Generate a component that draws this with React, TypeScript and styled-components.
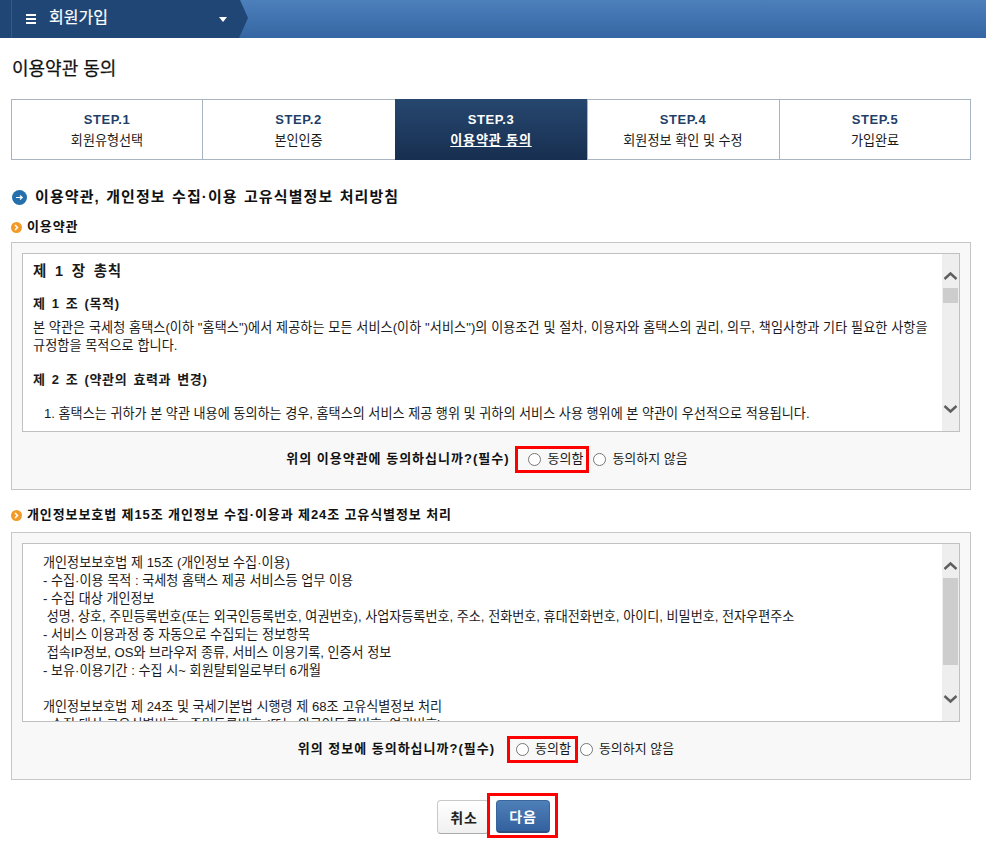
import React from "react";
import styled, { createGlobalStyle } from "styled-components";

const Global = createGlobalStyle`
  html, body { margin: 0; padding: 0; background: #fff; }
  body { font-family: "Liberation Sans", "Noto Sans CJK KR", sans-serif; font-size: 13px; color: #1a1a1a; }
  * { box-sizing: border-box; }
`;

const Page = styled.div`
  width: 986px;
  height: 844px;
  overflow: hidden;
  display: flex;
  flex-direction: column;
`;

const TopBar = styled.header`
  height: 38px;
  display: flex;
  background: linear-gradient(#4c80bb, #3566a3);
`;

const MenuTab = styled.div`
  width: 248px;
  height: 38px;
  flex: none;
  padding-left: 11px;
  color: #fff;
  background: #204675;
  clip-path: polygon(0 0, 240px 0, 248px 18px, 239px 38px, 0 38px);
`;

const MenuInner = styled.div`
  height: 38px;
  display: flex;
  align-items: center;
  border-left: 1px solid #2d5c92;
  padding-left: 14px;
`;

const MenuTitle = styled.span`
  font-size: 16px;
  line-height: 24px;
  margin-left: 13px;
  width: 170px;
  margin-top: -3px;
  -webkit-text-stroke: 0.2px #fff;
`;

const Main = styled.main`
  padding: 0 15px 0 11px;
  display: flex;
  flex-direction: column;
`;

const PageTitle = styled.h1`
  margin: 21px 0 0 1px;
  height: 40px;
  font-size: 18px;
  line-height: 20px;
  font-weight: 400;
  color: #111;
  -webkit-text-stroke: 0.25px #111;
`;

const Steps = styled.ol`
  list-style: none;
  margin: 0;
  padding: 0;
  display: grid;
  grid-template-columns: 190px 193px 192px 192px 1fr;
  height: 61px;
  border: 1px solid #a8b4c0;
`;

const Step = styled.li<{ $active?: boolean; $first?: boolean; $inner?: boolean }>`
  display: flex;
  flex-direction: column;
  align-items: center;
  border-left: ${(p) => (p.$first || p.$active ? "0" : "1px solid #a8b4c0")};
  margin: ${(p) => (p.$active ? "-1px 0" : "0")};
  height: ${(p) => (p.$active ? "61px" : "59px")};
  padding-top: ${(p) => (p.$active ? "12px" : "11px")};
  padding-right: ${(p) => (p.$inner ? "1px" : "0")};
  background: ${(p) => (p.$active ? "linear-gradient(#27476f, #172f50)" : "#fff")};
  color: ${(p) => (p.$active ? "#fff" : "#1a1a1a")};
`;

const StepNo = styled.span<{ $active?: boolean }>`
  font-size: 13px;
  line-height: 18px;
  font-weight: 700;
  letter-spacing: 0.6px;
  color: ${(p) => (p.$active ? "#fff" : "#1f3f68")};
`;

const StepName = styled.span<{ $active?: boolean }>`
  font-size: 13.1px;
  line-height: 18px;
  margin-top: 3px;
  font-weight: ${(p) => (p.$active ? 700 : 400)};
  letter-spacing: ${(p) => (p.$active ? "0.8px" : "0")};
  text-decoration: ${(p) => (p.$active ? "underline" : "none")};
`;

const SectionTitle = styled.h2`
  margin: 27px 0 0 1px;
  display: flex;
  align-items: center;
  gap: 8px;
  height: 20px;
  font-size: 15px;
  line-height: 20px;
  font-weight: 700;
  letter-spacing: 1.1px;
  word-spacing: 1px;
  color: #111;
`;

const SubTitle = styled.h3<{ $top: number }>`
  margin: ${(p) => p.$top}px 0 0;
  display: flex;
  align-items: center;
  gap: 5px;
  height: 18px;
  font-size: 13px;
  line-height: 18px;
  font-weight: 700;
  letter-spacing: 0.9px;
  color: #111;
`;

const AgreeBox = styled.section<{ $top: number }>`
  margin-top: ${(p) => p.$top}px;
  height: 248px;
  border: 1px solid #c6c6c6;
  background: #f8f8f8;
  padding: 10px 10px 0;
  display: flex;
  flex-direction: column;
`;

const TermsFrame = styled.div`
  height: 179px;
  border: 1px solid #c0c0c0;
  background: #fff;
  display: flex;
  flex: none;
`;

const TermsBody = styled.div`
  flex: 1;
  min-width: 0;
  overflow: hidden;
  padding: 7px 10px 0;
`;

const Scrollbar = styled.div`
  width: 17px;
  flex: none;
  background: #eee;
  display: flex;
  flex-direction: column;
  align-items: center;
  padding-right: 1px;
  padding-top: 17px;
`;

const Thumb = styled.div<{ $h: number }>`
  width: 15px;
  height: ${(p) => p.$h}px;
  margin-top: 7px;
  background: #cdcdcd;
`;

const BottomArrow = styled.svg`
  margin-top: auto;
  margin-bottom: 17px;
`;

const ChapterTitle = styled.h4`
  margin: 0;
  font-size: 14.5px;
  line-height: 20px;
  font-weight: 700;
  letter-spacing: 0.8px;
  word-spacing: 3px;
  color: #1a1a1a;
`;

const ArticleTitle = styled.h5<{ $top: number }>`
  margin: ${(p) => p.$top}px 0 0;
  font-size: 13px;
  line-height: 18px;
  font-weight: 700;
  letter-spacing: 0.6px;
  word-spacing: 2px;
  color: #1a1a1a;
`;

const Para = styled.p`
  margin: 6px 0 0;
  font-size: 13.1px;
  line-height: 18px;
  letter-spacing: 0.08px;
  color: #1a1a1a;
`;

const TermList = styled.ol`
  margin: 16px 0 0;
  padding: 0 0 0 11px;
  list-style: none;
  font-size: 13.1px;
  line-height: 18px;
`;

const PlainLines = styled.div`
  padding: 3px 0 0 10px;
  font-size: 13.1px;
  line-height: 18px;
  white-space: pre;
  color: #1a1a1a;
`;

const Question = styled.div<{ $shift: number }>`
  flex: 1;
  display: flex;
  align-items: center;
  justify-content: center;
  padding: 0 ${(p) => p.$shift}px 3px 0;
  font-size: 13px;
  line-height: 18px;
`;

const QuestionText = styled.strong<{ $gap: number }>`
  font-weight: 700;
  letter-spacing: 1px;
  color: #111;
  margin-right: ${(p) => p.$gap}px;
`;

const Choice = styled.label<{ $after?: number }>`
  display: inline-flex;
  align-items: center;
  margin-right: ${(p) => p.$after ?? 0}px;
  gap: 6px;
  white-space: nowrap;
`;

const MarkedChoice = styled(Choice)<{ $pl: number; $pr: number }>`
  height: 27px;
  padding: 0 ${(p) => p.$pr}px 0 ${(p) => p.$pl}px;
  border: 3px solid #f00;
`;

const Radio = styled.input.attrs({ type: "radio" })`
  margin: 0;
  width: 13px;
  height: 13px;
`;

const Actions = styled.div`
  margin-top: 13px;
  display: flex;
  justify-content: center;
  align-items: flex-start;
  padding-left: 13px;
`;

const CancelButton = styled.button`
  width: 52px;
  height: 34px;
  margin: 7px -2px 0 0;
  border: 1px solid #c8c8c8;
  border-bottom-color: #aaa;
  border-radius: 4px;
  background: linear-gradient(#fff, #f0f0f0);
  font: 700 14px "Liberation Sans", "Noto Sans CJK KR", sans-serif;
  letter-spacing: 0.8px;
  color: #222;
  padding: 0 0 0 2px;
`;

const NextMark = styled.div`
  border: 3px solid #f00;
  padding: 4px 5px 0 6px;
  height: 45px;
  width: 71px;
  display: flex;
  position: relative;
`;

const NextButton = styled.button`
  width: 54px;
  height: 33px;
  margin: 0;
  border: 1px solid #3a659c;
  border-bottom: 2px solid #2b4f80;
  border-radius: 4px;
  background: linear-gradient(#4f7fb7, #33619f);
  font: 700 14px "Liberation Sans", "Noto Sans CJK KR", sans-serif;
  letter-spacing: 0.8px;
  color: #fff;
  padding: 0;
`;

const Up = () => (
  <svg width="15" height="10" viewBox="0 0 15 10"><path d="M1.5 8 7.5 2.5 13.5 8" fill="none" stroke="#5f5f5f" strokeWidth="2.4" /></svg>
);
const Down = () => (
  <BottomArrow width="15" height="10" viewBox="0 0 15 10"><path d="M1.5 2 7.5 7.5 13.5 2" fill="none" stroke="#5f5f5f" strokeWidth="2.4" /></BottomArrow>
);

const Bullet = () => (
  <svg width="11" height="11" viewBox="0 0 11 11"><circle cx="5.5" cy="5.5" r="5.5" fill="#f39a26" /><path d="M4 3l2.5 2.5L4 8" stroke="#fff" strokeWidth="1.5" fill="none" /></svg>
);

const steps = [
  ["STEP.1", "회원유형선택"],
  ["STEP.2", "본인인증"],
  ["STEP.3", "이용약관 동의"],
  ["STEP.4", "회원정보 확인 및 수정"],
  ["STEP.5", "가입완료"],
];

const privacy = `개인정보보호법 제 15조 (개인정보 수집·이용)
- 수집·이용 목적 : 국세청 홈택스 제공 서비스등 업무 이용
- 수집 대상 개인정보
 성명, 상호, 주민등록번호(또는 외국인등록번호, 여권번호), 사업자등록번호, 주소, 전화번호, 휴대전화번호, 아이디, 비밀번호, 전자우편주소
- 서비스 이용과정 중 자동으로 수집되는 정보항목
 접속IP정보, OS와 브라우저 종류, 서비스 이용기록, 인증서 정보
- 보유·이용기간 : 수집 시~ 회원탈퇴일로부터 6개월

개인정보보호법 제 24조 및 국세기본법 시행령 제 68조 고유식별정보 처리
- 수집 대상 고유식별번호 : 주민등록번호 (또는 외국인등록번호, 여권번호)`;

export default function App() {
  return (
    <Page>
      <Global />
      <TopBar>
        <MenuTab>
          <MenuInner>
            <svg width="10" height="10" viewBox="0 0 10 10"><path d="M0 0h10v2H0zM0 4h10v2H0zM0 8h10v2H0z" fill="#fff" /></svg>
            <MenuTitle>회원가입</MenuTitle>
            <svg width="8" height="5" viewBox="0 0 8 5"><path d="M0 0h8L4 5z" fill="#fff" /></svg>
          </MenuInner>
        </MenuTab>
      </TopBar>
      <Main>
        <PageTitle>이용약관 동의</PageTitle>
        <Steps>
          {steps.map(([no, name], i) => (
            <Step key={no} $active={i === 2} $first={i === 0} $inner={i === 1 || i === 3}>
              <StepNo $active={i === 2}>{no}</StepNo>
              <StepName $active={i === 2}>{name}</StepName>
            </Step>
          ))}
        </Steps>
        <SectionTitle>
          <svg width="15" height="15" viewBox="0 0 15 15"><circle cx="7.5" cy="7.5" r="7.5" fill="#2570ac" /><path d="M4 7.5h6M8 5.5l2.2 2-2.2 2" stroke="#fff" strokeWidth="1.2" fill="none" /></svg>
          이용약관, 개인정보 수집·이용 고유식별정보 처리방침
        </SectionTitle>
        <SubTitle $top={11}>
          <Bullet />
          이용약관
        </SubTitle>
        <AgreeBox $top={6}>
          <TermsFrame>
            <TermsBody>
              <ChapterTitle>제 1 장 총칙</ChapterTitle>
              <ArticleTitle $top={14}>제 1 조 (목적)</ArticleTitle>
              <Para>본 약관은 국세청 홈택스(이하 "홈택스")에서 제공하는 모든 서비스(이하 "서비스")의 이용조건 및 절차, 이용자와 홈택스의 권리, 의무, 책임사항과 기타 필요한 사항을 규정함을 목적으로 합니다.</Para>
              <ArticleTitle $top={16}>제 2 조 (약관의 효력과 변경)</ArticleTitle>
              <TermList>
                <li>1. 홈택스는 귀하가 본 약관 내용에 동의하는 경우, 홈택스의 서비스 제공 행위 및 귀하의 서비스 사용 행위에 본 약관이 우선적으로 적용됩니다.</li>
              </TermList>
            </TermsBody>
            <Scrollbar>
              <Up />
              <Thumb $h={15} />
              <Down />
            </Scrollbar>
          </TermsFrame>
          <Question $shift={8}>
            <QuestionText $gap={6}>위의 이용약관에 동의하십니까?(필수)</QuestionText>
            <MarkedChoice $pl={10} $pr={3} $after={4}><Radio name="a" />동의함</MarkedChoice>
            <Choice><Radio name="a" />동의하지 않음</Choice>
          </Question>
        </AgreeBox>
        <SubTitle $top={16}>
          <Bullet />
          개인정보보호법 제15조 개인정보 수집·이용과 제24조 고유식별정보 처리
        </SubTitle>
        <AgreeBox $top={8}>
          <TermsFrame>
            <TermsBody>
              <PlainLines>{privacy}</PlainLines>
            </TermsBody>
            <Scrollbar>
              <Up />
              <Thumb $h={87} />
              <Down />
            </Scrollbar>
          </TermsFrame>
          <Question $shift={10}>
            <QuestionText $gap={12}>위의 정보에 동의하십니까?(필수)</QuestionText>
            <MarkedChoice $pl={6} $pr={4} $after={2}><Radio name="b" />동의함</MarkedChoice>
            <Choice><Radio name="b" />동의하지 않음</Choice>
          </Question>
        </AgreeBox>
        <Actions>
          <CancelButton>취소</CancelButton>
          <NextMark><NextButton>다음</NextButton></NextMark>
        </Actions>
      </Main>
    </Page>
  );
}
